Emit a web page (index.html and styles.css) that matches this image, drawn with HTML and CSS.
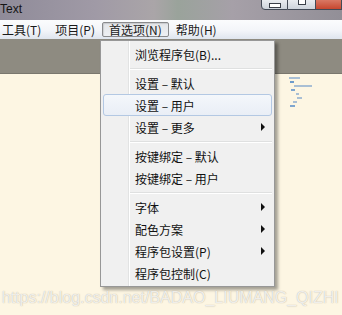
FILE: index.html
```html
<!DOCTYPE html>
<html lang="zh-CN">
<head>
  <meta charset="UTF-8">
  <title>Text</title>
  <link rel="stylesheet" href="styles.css">
</head>
<body>
<div class="window">
  <div class="titlebar">
    <span class="title">Text</span>
    <div class="controls">
      <span class="btn min"><i></i></span>
      <span class="btn max"><i></i></span>
      <span class="btn close"></span>
    </div>
  </div>

  <ul class="menubar">
    <li>工具(T)</li>
    <li>项目(P)</li>
    <li class="open">首选项(N)</li>
    <li>帮助(H)</li>
  </ul>

  <div class="tabbar"></div>

  <div class="editor">
    <div class="minimap">
      <span class="m1"></span>
      <span class="m2"></span>
      <span class="m3"></span>
      <span class="m4"></span>
      <span class="m5"></span>
      <span class="m6"></span>
      <span class="m7"></span>
      <span class="m8"></span>
    </div>
  </div>

  <!-- 首选项 下拉菜单 -->
  <div class="dropdown">
    <div class="item">浏览程序包(B)...</div>
    <div class="sep"></div>
    <div class="item">设置 – 默认</div>
    <div class="item hover">设置 – 用户</div>
    <div class="item sub">设置 – 更多</div>
    <div class="sep"></div>
    <div class="item">按键绑定 – 默认</div>
    <div class="item">按键绑定 – 用户</div>
    <div class="sep"></div>
    <div class="item sub">字体</div>
    <div class="item sub">配色方案</div>
    <div class="item sub">程序包设置(P)</div>
    <div class="item">程序包控制(C)</div>
  </div>

  <div class="watermark">https://blog.csdn.net/BADAO_LIUMANG_QIZHI</div>
</div>
</body>
</html>
```

FILE: styles.css
```css
body {
  margin: 0;
  font-family: "Liberation Sans", "Noto Sans CJK SC", sans-serif;
  font-size: 12px;
  color: #1a1a1a;
  overflow: hidden;
}
.window {
  position: relative;
  width: 342px;
  height: 315px;
  overflow: hidden;
  background-color: #fdf6e3;
}
.titlebar {
  height: 20px;
  display: flex;
  justify-content: space-between;
  background: linear-gradient(to right, #8f8b99 0%, #a09aa6 28%, #aaa5a8 45%, #9aa39b 52%, #a6a0a8 68%, #928f97 100%);
}
.title {
  line-height: 18px;
  font-size: 12px;
  color: #141414;
}
.controls {
  display: flex;
  height: 11px;
  margin-top: -1px;
}
.btn {
  display: flex;
  justify-content: center;
  width: 27px;
  height: 11px;
  border: 1px solid #434a56;
  border-left: none;
  background: linear-gradient(#e9ecf0, #cdd3db);
  box-sizing: border-box;
}
.btn.min {
  border-left: 1px solid #434a56;
  border-radius: 0 0 0 4px;
}
.btn.min i {
  width: 10px;
  height: 3px;
  margin-top: 3px;
  background: #fff;
  border: 1px solid #3a3f48;
}
.btn.max {
  width: 28px;
}
.btn.max i {
  width: 6px;
  height: 5px;
  margin-top: -1px;
  border: 1px solid #3a3f48;
  border-top: none;
  background: #fff;
  box-shadow: inset 0 0 0 1px #fff;
}
.btn.close {
  width: 26px;
  background: linear-gradient(#d97864, #c7472f);
}

.menubar {
  display: flex;
  height: 15px;
  margin: 0;
  padding: 2px 0 2px 0;
  list-style: none;
  background: linear-gradient(#fbfcfd, #f3f5f9 55%, #dfe5ee);
}
.menubar li {
  padding: 0 6px;
  border: 1px solid transparent;
  line-height: 13px;
  font-family: "Noto Sans CJK SC", sans-serif;
}
.menubar li:first-child {
  margin-left: -5px;
}
.menubar li.open {
  border-color: #8a8b8d;
  border-radius: 2px;
  background: linear-gradient(#e3e5e8, #eef0f3);
  box-shadow: inset 1px 1px 1px rgba(0,0,0,0.12);
}

.tabbar {
  height: 34px;
  background-color: #8e8b81;
  border-bottom: 1px solid #7a776e;
}

.editor {
  height: 241px;
  display: flex;
  justify-content: flex-end;
}
.minimap {
  width: 26px;
  margin: 3px 27px 0 0;
}
.minimap span {
  display: block;
  height: 2px;
  margin-bottom: 2px;
  background-color: #a9bfd4;
}
.m1 { width: 11px; }
.m2 { width: 4px; margin-left: 1px; background-color: #6d9ccc !important; }
.m3 { width: 18px; margin-left: 5px; }
.m4 { width: 4px; margin-left: 2px; background-color: #7fa6cf !important; }
.m5 { width: 3px; margin-left: 7px; }
.m6 { width: 5px; margin-left: 8px; }
.m7 { width: 4px; margin-left: 4px; }
.m8 { width: 5px; margin-left: 1px; background-color: #7fa6cf !important; }

/* 水印盖在菜单之上 */
.watermark {
  position: absolute;
  left: 2px;
  top: 290px;
  z-index: 2;
  font-size: 16px;
  line-height: 16px;
  white-space: nowrap;
  color: rgba(255,255,255,0.8);
  text-shadow: 0 0 1px rgba(110,100,80,0.55);
}

.dropdown {
  position: absolute;
  left: 100px;
  top: 40px;
  z-index: 1;
  width: 169px;
  padding: 2px;
  border: 1px solid #979797;
  background-color: #f0f0f0;
  background-image: linear-gradient(to right, transparent 27px, #e2e3e3 27px, #e2e3e3 28px, #fff 28px, #fff 29px, transparent 29px);
  box-shadow: 3px 3px 3px rgba(0,0,0,0.35);
  font-family: "Noto Sans CJK SC", sans-serif;
}
.item {
  display: flex;
  justify-content: space-between;
  align-items: center;
  height: 20px;
  padding: 0 6px 0 31px;
  border: 1px solid transparent;
  border-radius: 3px;
  color: #111;
}
.item.sub::after {
  content: "";
  border-left: 4px solid #111;
  border-top: 4px solid transparent;
  border-bottom: 4px solid transparent;
}
.item.hover {
  border-color: #b3c8e3;
  background: linear-gradient(#f4f7fb, #e9eef6);
}
.sep {
  height: 0;
  margin: 3px 0 2px 27px;
  border-top: 1px solid #dfe0e0;
  border-bottom: 1px solid #fff;
}
```
